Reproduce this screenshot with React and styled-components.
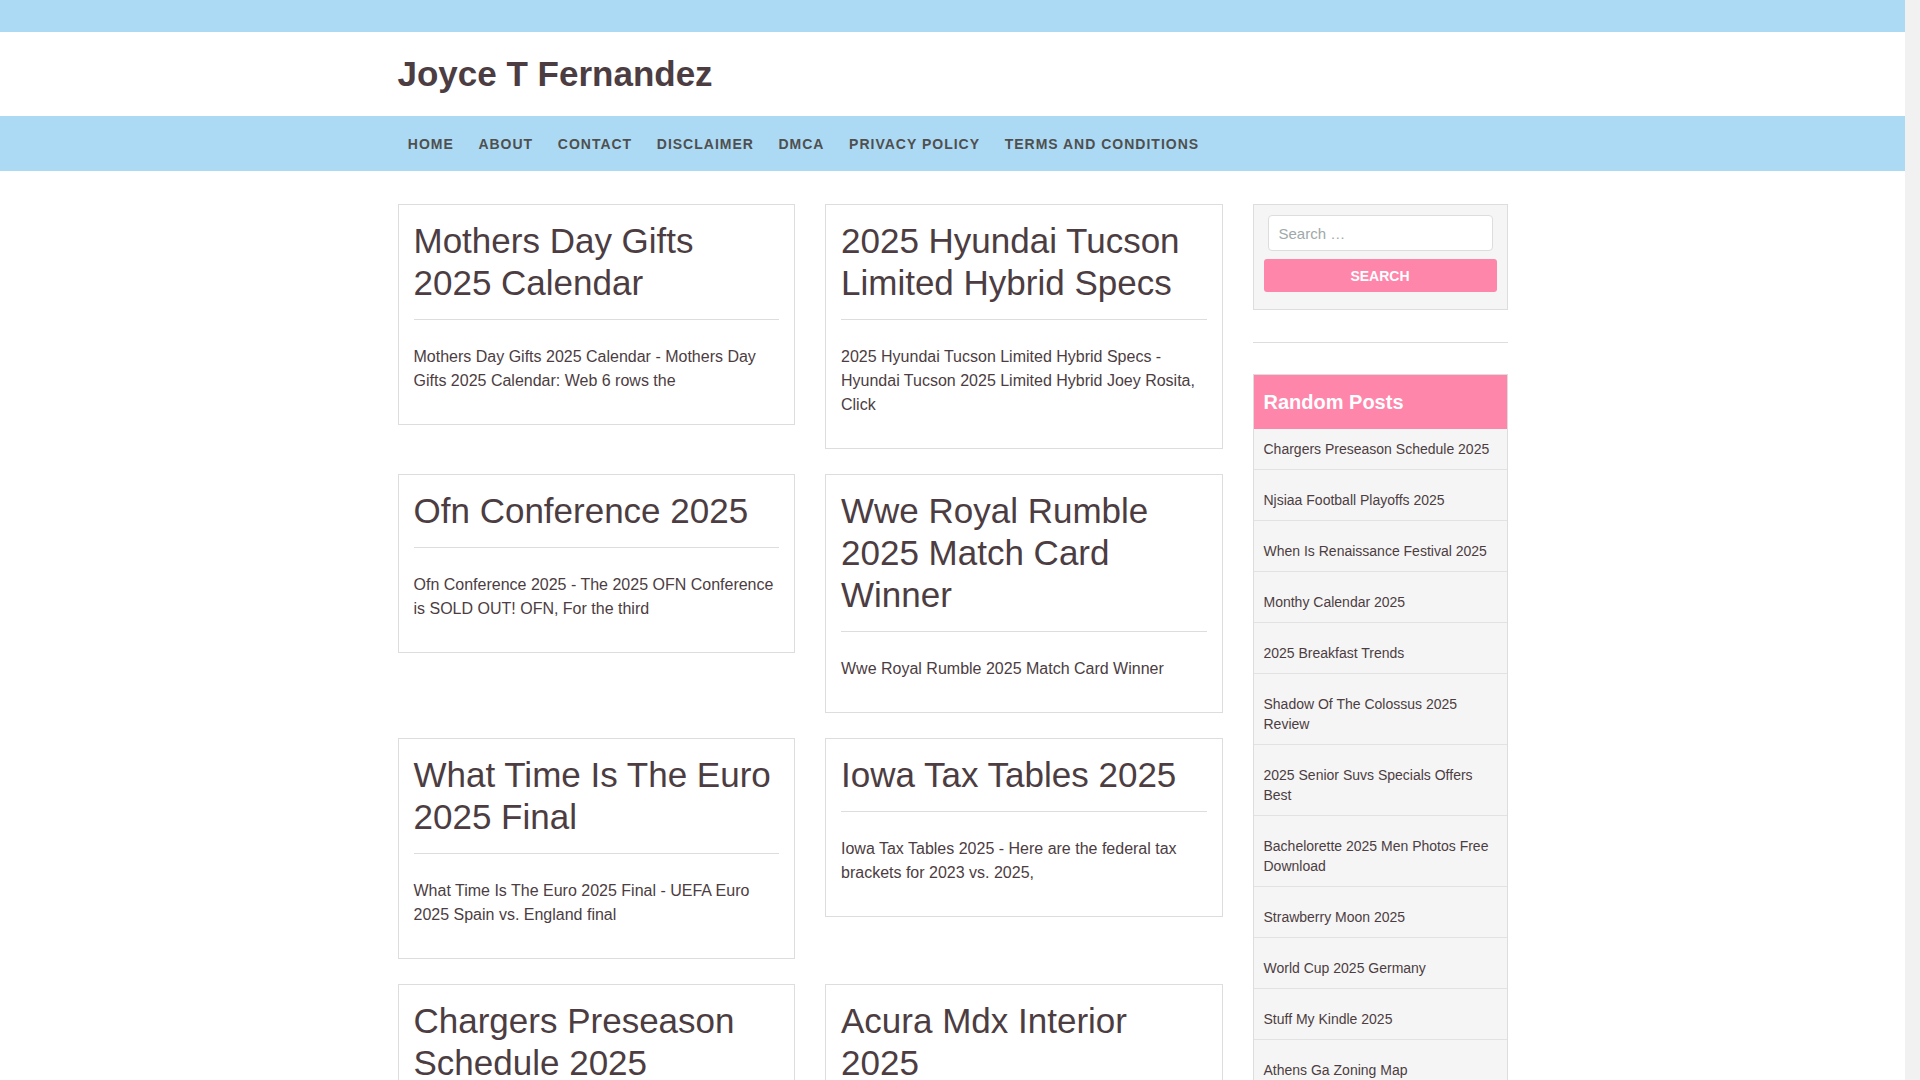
import React from 'react';
import styled, { createGlobalStyle } from 'styled-components';

const ink = '#4c3d42';
const line = '#dddddd';
const sky = '#acdaf4';
const pink = '#ff86ab';

const GlobalStyle = createGlobalStyle`
	html {
		background: #f1f1f1;
	}
	body {
		margin: 0 15px 0 0;
		background: #fff;
		color: ${ink};
		font-family: "Liberation Sans", Arial, sans-serif;
	}
	* {
		box-sizing: border-box;
	}
`;

const TopBar = styled.div`
	height: 32px;
	background: ${sky};
`;

const Container = styled.div`
	width: 1110px;
	margin: 0 auto;
`;

const Header = styled.header`
	height: 84px;
	display: flex;
	align-items: center;
`;

const SiteTitle = styled.h1`
	margin: 0;
	font-size: 35px;
	font-weight: bold;
	line-height: 1.15;
	color: ${ink};
`;

const NavBar = styled.nav`
	height: 55px;
	background: ${sky};
`;

const NavList = styled.ul`
	display: flex;
	align-items: center;
	height: 55px;
	margin: 0 0 0 -2px;
	padding: 0;
	list-style: none;
`;

const NavItem = styled.li`
	padding: 0 12.3px;
	font-size: 14px;
	font-weight: bold;
	letter-spacing: 1px;
	text-transform: uppercase;
	color: #4f4f4f;
`;

const Main = styled(Container)`
	display: grid;
	grid-template-columns: 825px 255px;
	column-gap: 30px;
	padding: 33px 0 40px;
	align-items: start;
`;

const Posts = styled.div`
	display: grid;
	grid-template-columns: 1fr 1fr;
	column-gap: 30px;
	row-gap: 25px;
	align-items: start;
`;

const Card = styled.article`
	border: 1px solid ${line};
	background: #fff;
	padding: 15px 15px 15px;
`;

const PostTitle = styled.h2`
	margin: 0;
	padding-bottom: 15px;
	border-bottom: 1px solid ${line};
	font-size: 35px;
	font-weight: normal;
	line-height: 42px;
	color: ${ink};
`;

const Excerpt = styled.p`
	margin: 25px 0 16px;
	font-size: 16px;
	line-height: 24px;
	color: ${ink};
`;

const Sidebar = styled.aside`
	display: flex;
	flex-direction: column;
`;

const SearchWidget = styled.form`
	background: #f5f5f5;
	border: 1px solid ${line};
	padding: 10px 10px 17px;
`;

const SearchInput = styled.input`
	display: block;
	width: calc(100% - 8px);
	height: 36px;
	margin: 0 4px;
	padding: 0 10px;
	border: 1px solid ${line};
	border-radius: 4px;
	background: #fff;
	font-family: inherit;
	font-size: 15px;
	color: ${ink};

	&::placeholder {
		color: #a0a9a9;
	}
`;

const SearchButton = styled.button`
	display: block;
	width: 100%;
	height: 33px;
	margin-top: 8px;
	border: none;
	border-radius: 3px;
	background: ${pink};
	color: #fff;
	font-family: inherit;
	font-size: 14px;
	font-weight: bold;
	text-transform: uppercase;
`;

const Separator = styled.hr`
	height: 1px;
	margin: 32px 0 31px;
	border: none;
	background: ${line};
`;

const Widget = styled.section`
	border: 1px solid ${line};
	background: #f5f5f5;
`;

const WidgetTitle = styled.h3`
	display: flex;
	align-items: center;
	height: 54px;
	margin: 0;
	padding: 0 10px;
	background: ${pink};
	color: #fff;
	font-size: 20px;
	font-weight: bold;
`;

const PostList = styled.ul`
	margin: 0;
	padding: 0;
	list-style: none;
`;

const PostLink = styled.li`
	padding: 20px 10px 10px;
	border-bottom: 1px solid #e2e2e2;
	font-size: 14px;
	line-height: 20px;
	color: ${ink};

	&:first-child {
		padding-top: 10px;
	}
`;

const menu = ['Home', 'About', 'Contact', 'Disclaimer', 'DMCA', 'Privacy Policy', 'Terms and Conditions'];

const posts = [
	{
		title: 'Mothers Day Gifts 2025 Calendar',
		excerpt: 'Mothers Day Gifts 2025 Calendar - Mothers Day Gifts 2025 Calendar: Web 6 rows the',
	},
	{
		title: '2025 Hyundai Tucson Limited Hybrid Specs',
		excerpt: '2025 Hyundai Tucson Limited Hybrid Specs - Hyundai Tucson 2025 Limited Hybrid Joey Rosita, Click',
	},
	{
		title: 'Ofn Conference 2025',
		excerpt: 'Ofn Conference 2025 - The 2025 OFN Conference is SOLD OUT! OFN, For the third',
	},
	{
		title: 'Wwe Royal Rumble 2025 Match Card Winner',
		excerpt: 'Wwe Royal Rumble 2025 Match Card Winner',
	},
	{
		title: 'What Time Is The Euro 2025 Final',
		excerpt: 'What Time Is The Euro 2025 Final - UEFA Euro 2025 Spain vs. England final',
	},
	{
		title: 'Iowa Tax Tables 2025',
		excerpt: 'Iowa Tax Tables 2025 - Here are the federal tax brackets for 2023 vs. 2025,',
	},
	{
		title: 'Chargers Preseason Schedule 2025',
		excerpt: 'Chargers Preseason Schedule 2025 - The Chargers will open the preseason at home,',
	},
	{
		title: 'Acura Mdx Interior 2025',
		excerpt: 'Acura Mdx Interior 2025 - The 2025 Acura MDX cabin gets a new',
	},
];

const randomPosts = [
	'Chargers Preseason Schedule 2025',
	'Njsiaa Football Playoffs 2025',
	'When Is Renaissance Festival 2025',
	'Monthy Calendar 2025',
	'2025 Breakfast Trends',
	'Shadow Of The Colossus 2025 Review',
	'2025 Senior Suvs Specials Offers Best',
	'Bachelorette 2025 Men Photos Free Download',
	'Strawberry Moon 2025',
	'World Cup 2025 Germany',
	'Stuff My Kindle 2025',
	'Athens Ga Zoning Map',
	'Ofn Conference 2025',
];

const App = () => (
	<>
		<GlobalStyle />
		<TopBar />
		<Container>
			<Header>
				<SiteTitle>Joyce T Fernandez</SiteTitle>
			</Header>
		</Container>
		<NavBar>
			<Container>
				<NavList>
					{menu.map((item) => (
						<NavItem key={item}>{item}</NavItem>
					))}
				</NavList>
			</Container>
		</NavBar>
		<Main>
			<Posts>
				{posts.map((post) => (
					<Card key={post.title}>
						<PostTitle>{post.title}</PostTitle>
						<Excerpt>{post.excerpt}</Excerpt>
					</Card>
				))}
			</Posts>
			<Sidebar>
				<SearchWidget onSubmit={(e) => e.preventDefault()}>
					<SearchInput type='search' placeholder='Search …' />
					<SearchButton type='submit'>Search</SearchButton>
				</SearchWidget>
				<Separator />
				<Widget>
					<WidgetTitle>Random Posts</WidgetTitle>
					<PostList>
						{randomPosts.map((title) => (
							<PostLink key={title}>{title}</PostLink>
						))}
					</PostList>
				</Widget>
			</Sidebar>
		</Main>
	</>
);

export default App;
